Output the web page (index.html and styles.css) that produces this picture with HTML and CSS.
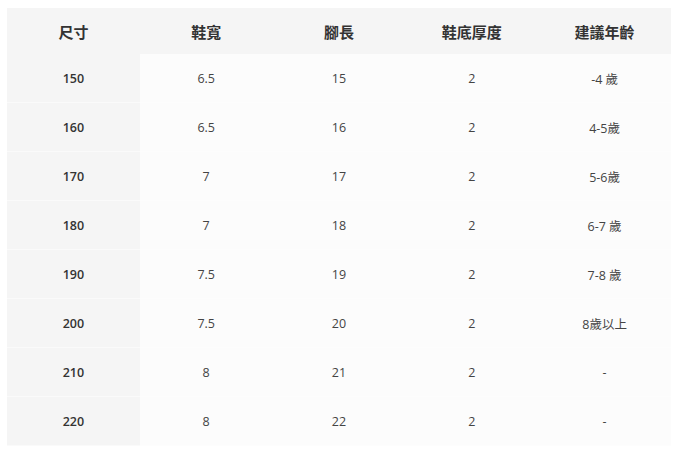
FILE: index.html
```html
<!DOCTYPE html>
<html lang="zh-Hant">
<head>
<meta charset="utf-8">
<link rel="stylesheet" href="styles.css">
</head>
<body>
<table class="size-table">
  <thead>
    <tr><th>尺寸</th><th>鞋寬</th><th>腳長</th><th>鞋底厚度</th><th>建議年齡</th></tr>
  </thead>
  <tbody>
    <tr><td class="size">150</td><td>6.5</td><td>15</td><td>2</td><td>-4 歲</td></tr>
    <tr><td class="size">160</td><td>6.5</td><td>16</td><td>2</td><td>4-5歲</td></tr>
    <tr><td class="size">170</td><td>7</td><td>17</td><td>2</td><td>5-6歲</td></tr>
    <tr><td class="size">180</td><td>7</td><td>18</td><td>2</td><td>6-7 歲</td></tr>
    <tr><td class="size">190</td><td>7.5</td><td>19</td><td>2</td><td>7-8 歲</td></tr>
    <tr><td class="size">200</td><td>7.5</td><td>20</td><td>2</td><td>8歲以上</td></tr>
    <tr><td class="size">210</td><td>8</td><td>21</td><td>2</td><td>-</td></tr>
    <tr><td class="size">220</td><td>8</td><td>22</td><td>2</td><td>-</td></tr>
  </tbody>
</table>
</body>
</html>
```
FILE: styles.css
```css
html, body {
  margin: 0;
  background: #ffffff;
}
body {
  padding: 8px 8px 8px 7px;
  font-family: "Open Sans", "Noto Sans CJK TC", sans-serif;
  color: #333;
}
.size-table {
  width: 664px;
  border-collapse: collapse;
  table-layout: fixed;
}
.size-table th {
  height: 46px;
  padding: 0;
  background: #f5f5f5;
  font-size: 15px;
  font-weight: 700;
  color: #333;
  text-align: center;
  vertical-align: middle;
  font-family: "Noto Sans CJK TC", sans-serif;
}
.size-table td {
  height: 48px;
  padding: 0;
  text-align: center;
  vertical-align: middle;
  font-size: 12.5px;
  color: #444;
  background: #fcfcfc;
  border-bottom: 1px solid #fdfdfd;
}
.size-table td.size {
  background: #f5f5f5;
  font-weight: 600;
  color: #333;
  border-bottom: 1px solid #fafafa;
}
```
